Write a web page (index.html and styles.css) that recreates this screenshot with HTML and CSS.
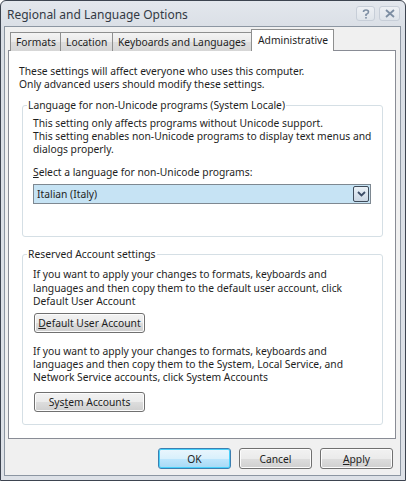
FILE: index.html
```html
<!DOCTYPE html>
<html>

<head>
    <meta charset="utf-8" />
    <title>Regional and Language Options</title>
    <link rel="stylesheet" href="styles.css">
</head>

<body>
    <div class="window">
        <div class="titlebar">
            <div class="title">Regional and Language Options</div>
            <div class="caption-btn">
                <svg width="8" height="10" viewBox="0 0 8 10">
                    <path d="M1.5 3 Q1.5 1 4 1 Q6.5 1 6.5 3 Q6.5 4.5 4 5.5 L4 7" fill="none" stroke="#7d8ea3" stroke-width="1.6" />
                    <rect x="3.2" y="8" width="1.6" height="1.6" fill="#7d8ea3" />
                </svg>
            </div>
            <div class="caption-btn close">
                <svg width="10" height="9" viewBox="0 0 10 9">
                    <path d="M1 1 L9 8 M9 1 L1 8" stroke="#7d8ea3" stroke-width="1.8" />
                </svg>
            </div>
        </div>

        <div class="client">
            <div class="tabs">
                <div class="tab tab-formats">Formats</div>
                <div class="tab tab-location">Location</div>
                <div class="tab tab-keyboards">Keyboards and Languages</div>
                <div class="tab tab-admin selected">Administrative</div>
            </div>

            <div class="panel">
                <div class="lines">
                    These settings will affect everyone who uses this computer.<br />
                    Only advanced users should modify these settings.
                </div>

                <fieldset class="group group-locale">
                    <legend>Language for non-Unicode programs (System Locale)</legend>
                    <div class="lines">
                        This setting only affects programs without Unicode support.<br />
                        This setting enables non-Unicode programs to display text menus and<br />
                        dialogs properly.
                    </div>
                    <div class="lines select-label"><u>S</u>elect a language for non-Unicode programs:</div>
                    <div class="combo">
                        <span class="combo-value">Italian (Italy)</span>
                        <span class="combo-arrow">
                            <svg width="9" height="6" viewBox="0 0 9 6">
                                <path d="M1 1 L4.5 4.5 L8 1" fill="none" stroke="#3b4c66" stroke-width="1.8" />
                            </svg>
                        </span>
                    </div>
                </fieldset>

                <fieldset class="group group-reserved">
                    <legend>Reserved Account settings</legend>
                    <div class="lines">
                        If you want to apply your changes to formats, keyboards and<br />
                        languages and then copy them to the default user account, click<br />
                        Default User Account
                    </div>
                    <button class="btn btn-wide btn-first"><u>D</u>efault User Account</button>
                    <div class="lines second-text">
                        If you want to apply your changes to formats, keyboards and<br />
                        languages and then copy them to the System, Local Service, and<br />
                        Network Service accounts, click System Accounts
                    </div>
                    <button class="btn btn-wide btn-second">Sys<u>t</u>em Accounts</button>
                </fieldset>
            </div>

            <div class="dialog-buttons">
                <button class="btn btn-default">OK</button>
                <button class="btn">Cancel</button>
                <button class="btn"><u>A</u>pply</button>
            </div>
        </div>
    </div>
</body>

</html>
```

FILE: styles.css
```css
html,
body {
    margin: 0;
    background: #fff;
}

body {
    font-family: "Noto Sans", sans-serif;
    font-size: 10.3px;
    color: #1e1e1e;
}

.window {
    box-sizing: border-box;
    width: 406px;
    height: 481px;
    display: flex;
    flex-direction: column;
    border: 1px solid #3d4450;
    border-radius: 6px 6px 0 0;
    background: linear-gradient(#e3e7ed, #d9dee5 30px, #dde1e7);
    padding: 0 4px 4px 3px;
}

.titlebar {
    height: 25px;
    display: flex;
    align-items: center;
    gap: 4px;
    padding-left: 3px;
    padding-right: 1px;
}

.title {
    flex: 1;
    font-size: 12px;
    color: #333a44;
    margin-top: 2px;
}

.caption-btn {
    width: 17px;
    height: 13px;
    display: flex;
    align-items: center;
    justify-content: center;
    border: 1px solid #c7ced8;
    border-radius: 3px;
    background: linear-gradient(#edf0f4, #dfe4ea);
}

.caption-btn.close {
    width: 19px;
}

.client {
    flex: 1;
    display: flex;
    flex-direction: column;
    background: #f0f0f0;
    border: 1px solid #8c96a2;
    padding: 3px 4px 0 3px;
}

.tabs {
    display: flex;
    align-items: flex-end;
    height: 21px;
    padding-left: 2px;
    margin-bottom: -1px;
    position: relative;
    z-index: 1;
}

.tab {
    box-sizing: border-box;
    height: 19px;
    padding-left: 5px;
    line-height: 19px;
    white-space: nowrap;
    border: 1px solid #8e8f8f;
    border-bottom: none;
    border-left: none;
    background: linear-gradient(#f4f4f4, #e9e9e9 50%, #dddddd 51%, #d6d6d6);
}

.tab-formats {
    width: 51px;
    border-left: 1px solid #8e8f8f;
}

.tab-location {
    width: 52px;
}

.tab-keyboards {
    width: 139px;
}

.tab.selected {
    width: 83px;
    height: 22px;
    line-height: 20px;
    padding-left: 6px;
    border-left: 1px solid #8e8f8f;
    margin-left: -1px;
    background: #fff;
}

.panel {
    box-sizing: border-box;
    height: 389px;
    background: #fff;
    border: 1px solid #898c95;
    padding: 14px 12px 0 10px;
}

.lines {
    line-height: 13.3px;
    white-space: nowrap;
}

.group {
    min-width: 0;
    margin: 0 0 0 3px;
    border: 1px solid #d5dfe5;
    border-radius: 3px;
    padding: 5px 10px 0 10px;
}

.group legend {
    padding: 0 1px;
    margin-left: -6px;
    line-height: 13.3px;
}

.group-locale {
    margin-top: 7px;
    padding-bottom: 32px;
}

.group-reserved {
    margin-top: 11px;
    padding-top: 7px;
    padding-bottom: 12px;
}

.select-label {
    margin-top: 9px;
}

.combo {
    box-sizing: border-box;
    height: 20px;
    margin: 5px 1px 0 0;
    display: flex;
    align-items: center;
    border: 1px solid #7e8891;
    background: #c6e3f4;
    padding: 1px 1px 1px 3px;
}

.combo-value {
    flex: 1;
}

.combo-arrow {
    box-sizing: border-box;
    width: 16px;
    height: 16px;
    display: flex;
    align-items: center;
    justify-content: center;
    border: 1px solid #3e4b5a;
    border-radius: 2px;
    background: linear-gradient(#eaf1f7, #c9d6e3);
}

.btn {
    box-sizing: border-box;
    height: 21px;
    width: 73px;
    font-family: inherit;
    font-size: inherit;
    color: #1e1e1e;
    border: 1px solid #707070;
    border-radius: 3px;
    background: linear-gradient(#f2f2f2, #ebebeb 50%, #dddddd 51%, #cfcfcf);
    box-shadow: inset 0 0 0 1px #fcfcfc;
    padding: 0;
}

.btn-wide {
    display: block;
    width: 111px;
    height: 20px;
    margin-left: 1px;
}

.btn-first {
    margin-top: 5px;
}

.second-text {
    margin-top: 11.5px;
}

.btn-second {
    margin-top: 7px;
}

.btn-default {
    border-color: #3c7fb1;
    background: linear-gradient(#eaf6fd, #d9f0fc 50%, #bee6fd 51%, #a7d9f5);
    box-shadow: inset 0 0 0 1px #48d1fb;
}

.dialog-buttons {
    display: flex;
    justify-content: flex-end;
    gap: 8px;
    margin-top: 9px;
    padding-right: 3px;
}
```
